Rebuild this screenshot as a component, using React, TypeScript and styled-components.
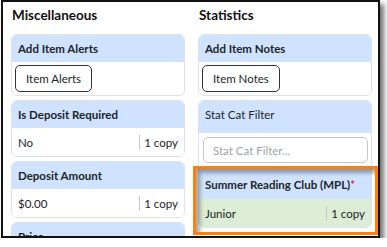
import React from "react";
import styled, { createGlobalStyle } from "styled-components";

const Global = createGlobalStyle`
  html, body { margin: 0; padding: 0; background: #fff; }
  body { font-family: Lato, "Noto Sans", sans-serif; color: #212529; }
`;

const Frame = styled.div`
  position: relative;
  box-sizing: border-box;
  margin-left: 1px;
  width: 379px;
  height: 238px;
  border: 2px solid #111;
  box-shadow: 4px 4px 5px rgba(0, 0, 0, 0.55);
  overflow: hidden;
  background: #fff;
`;

const Columns = styled.div`
  display: grid;
  grid-template-columns: 174px 174px;
  column-gap: 13px;
  padding: 3px 0 0 8px;
`;

const Column = styled.div`
  display: flex;
  flex-direction: column;
  gap: 4px;
`;

const Heading = styled.h2`
  margin: 0 0 5px 1px;
  font-size: 13.5px;
  line-height: 20px;
  font-weight: 700;
  color: #111;
`;

const Card = styled.div`
  border: 1px solid #dee2e6;
  border-radius: 6px;
  overflow: hidden;
  background: #fff;
`;

const CardHeader = styled.div<{ $plain?: boolean; $top?: number }>`
  background: #cfe2ff;
  height: ${(p) => (p.$top !== undefined ? "32px" : "27px")};
  padding: ${(p) => (p.$top !== undefined ? `${p.$top}px 6px 0` : "0 6px")};
  box-sizing: border-box;
  display: flex;
  align-items: ${(p) => (p.$top !== undefined ? "flex-start" : "center")};
  font-size: 11.5px;
  line-height: 16px;
  font-weight: ${(p) => (p.$plain ? 400 : 700)};
  color: #212529;
  white-space: nowrap;
`;

const Required = styled.span`
  color: #dc3545;
`;

const ButtonBody = styled.div`
  padding: 3px 3px;
`;

const OutlineButton = styled.button`
  height: 27px;
  padding: 0 10px;
  border: 1px solid #333;
  border-radius: 5px;
  background: #fff;
  font-family: inherit;
  font-size: 11.5px;
  color: #212529;
`;

const Row = styled.div<{ $green?: boolean }>`
  height: 28px;
  display: flex;
  align-items: center;
  padding: 0 6px 0 6px;
  font-size: 11.5px;
  background: ${(p) => (p.$green ? "#dcecd5" : "#fff")};
`;

const Value = styled.span`
  flex: 1;
`;

const Count = styled.span`
  border-left: 1px solid #c8c8c8;
  padding-left: 4px;
  line-height: 15px;
`;

const InputBody = styled.div`
  padding: 4px 3px 4px 4px;
`;

const FilterInput = styled.input`
  display: block;
  box-sizing: border-box;
  width: 100%;
  height: 26px;
  border: 1px solid #c4c8cc;
  border-radius: 5px;
  padding: 0 9px;
  font-family: inherit;
  font-size: 11.5px;
  &::placeholder {
    color: #a0a4a8;
  }
`;

const Highlight = styled.div`
  position: absolute;
  left: 190px;
  top: 164px;
  width: 185px;
  height: 69px;
  box-sizing: border-box;
  border: 3px solid #ff7f0a;
  box-shadow: inset 4px 4px 4px rgba(0, 0, 0, 0.35);
  pointer-events: none;
`;

export default function App() {
  return (
    <>
      <Global />
      <Frame>
        <Columns>
          <Column>
            <Heading>Miscellaneous</Heading>
            <Card>
              <CardHeader>Add Item Alerts</CardHeader>
              <ButtonBody>
                <OutlineButton>Item Alerts</OutlineButton>
              </ButtonBody>
            </Card>
            <Card>
              <CardHeader>Is Deposit Required</CardHeader>
              <Row>
                <Value>No</Value>
                <Count>1 copy</Count>
              </Row>
            </Card>
            <Card>
              <CardHeader>Deposit Amount</CardHeader>
              <Row>
                <Value>$0.00</Value>
                <Count>1 copy</Count>
              </Row>
            </Card>
            <Card>
              <CardHeader>Price</CardHeader>
              <Row>
                <Value></Value>
              </Row>
            </Card>
          </Column>
          <Column>
            <Heading>Statistics</Heading>
            <Card>
              <CardHeader>Add Item Notes</CardHeader>
              <ButtonBody>
                <OutlineButton>Item Notes</OutlineButton>
              </ButtonBody>
            </Card>
            <Card>
              <CardHeader $plain $top={6}>Stat Cat Filter</CardHeader>
              <InputBody>
                <FilterInput placeholder="Stat Cat Filter..." />
              </InputBody>
              <CardHeader $top={10}>
                Summer Reading Club (MPL)<Required>*</Required>
              </CardHeader>
              <Row $green>
                <Value>Junior</Value>
                <Count>1 copy</Count>
              </Row>
            </Card>
          </Column>
        </Columns>
        <Highlight />
      </Frame>
    </>
  );
}
